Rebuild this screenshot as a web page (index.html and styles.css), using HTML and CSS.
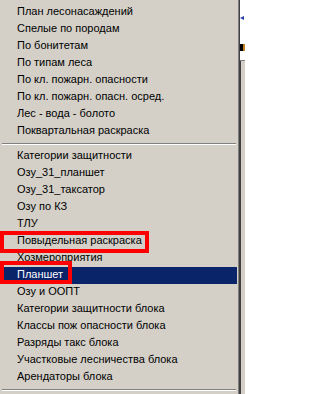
FILE: index.html
```html
<!DOCTYPE html>
<html>
<head>
<meta charset="utf-8">
<link rel="stylesheet" href="styles.css">
</head>
<body>
<div class="screen">
  <div class="menu">
    <div class="menu-inner">
      <div class="item">План лесонасаждений</div>
      <div class="item">Спелые по породам</div>
      <div class="item">По бонитетам</div>
      <div class="item">По типам леса</div>
      <div class="item">По кл. пожарн. опасности</div>
      <div class="item">По кл. пожарн. опасн. осред.</div>
      <div class="item">Лес - вода - болото</div>
      <div class="item">Поквартальная раскраска</div>
      <div class="sep"></div>
      <div class="item">Категории защитности</div>
      <div class="item">Озу_31_планшет</div>
      <div class="item">Озу_31_таксатор</div>
      <div class="item">Озу по КЗ</div>
      <div class="item">ТЛУ</div>
      <div class="item">Повыдельная раскраска</div>
      <div class="item">Хозмероприятия</div>
      <div class="item selected">Планшет</div>
      <div class="item">Озу и ООПТ</div>
      <div class="item">Категории защитности блока</div>
      <div class="item">Классы пож опасности блока</div>
      <div class="item">Разряды такс блока</div>
      <div class="item">Участковые лесничества блока</div>
      <div class="item">Арендаторы блока</div>
      <div class="sep"></div>
    </div>
  </div>
  <div class="behind">
    <div class="behind-top">
      <div class="arrow"></div>
      <div class="glyph"></div>
    </div>
    <div class="behind-bottom"></div>
  </div>
  <div class="mark mark-a"></div>
  <div class="mark mark-b"></div>
</div>
</body>
</html>
```
FILE: styles.css
```css
html, body {
  margin: 0;
  padding: 0;
}
body {
  width: 245px;
  height: 394px;
  overflow: hidden;
  background: #ffffff;
  font-family: "Liberation Sans", Arial, sans-serif;
  font-size: 11px;
  color: #000;
}
.screen {
  position: relative;
  display: flex;
  width: 245px;
  height: 394px;
}
.menu {
  width: 239px;
  height: 394px;
  background: #d4d0c8;
  border-right: 1px solid #404040;
  flex: none;
}
.menu-inner {
  height: 394px;
  border-right: 1px solid #808080;
  padding: 4px 1px 0 2px;
  box-sizing: border-box;
}
.item {
  height: 17px;
  line-height: 15px;
  padding-left: 15px;
  white-space: nowrap;
}
.item.selected {
  background: #0a246a;
  color: #ffffff;
}
.sep {
  height: 8px;
  padding-top: 3px;
  box-sizing: border-box;
  margin-right: 1px;
}
.sep::before {
  content: "";
  display: block;
  height: 1px;
  background: #808080;
  border-bottom: 1px solid #ffffff;
}
.behind {
  flex: 1;
  display: flex;
  flex-direction: column;
}
.behind-top {
  height: 60px;
  background: #ffffff;
  border-bottom: 1px solid #808080;
  position: relative;
}
.arrow {
  position: absolute;
  left: 0;
  top: 16px;
  width: 4px;
  height: 4px;
  background: #2a3fa8;
  clip-path: polygon(0 50%, 100% 0, 100% 100%);
}
.glyph {
  position: absolute;
  left: 0;
  top: 44px;
  width: 3px;
  height: 7px;
  background: #000;
  border-right: 2px solid #c08020;
}
.behind-bottom {
  flex: 1;
  background: #d4d0c8;
  border-left: 1px solid #404040;
}
.mark {
  position: absolute;
  border: 4px solid #ff0000;
  box-sizing: border-box;
}
.mark-a {
  left: 0;
  top: 231px;
  width: 149px;
  height: 22px;
}
.mark-b {
  left: 0;
  top: 261px;
  width: 72px;
  height: 23px;
}
```
